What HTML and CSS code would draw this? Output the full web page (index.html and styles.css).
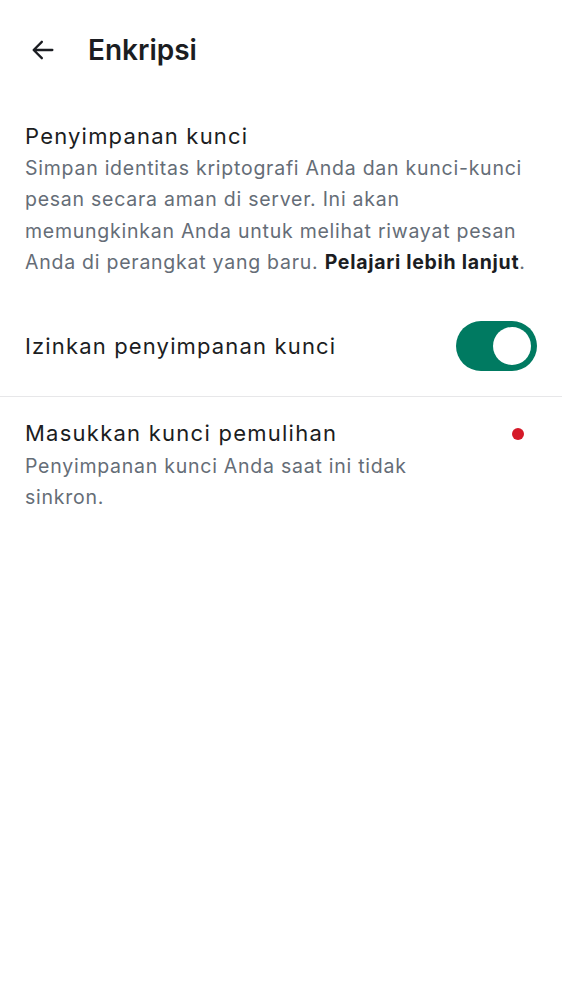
FILE: index.html
```html
<!DOCTYPE html>
<html lang="id">
<head>
<meta charset="utf-8">
<link rel="stylesheet" href="styles.css">
</head>
<body>
<header class="topbar">
  <svg class="back" width="28" height="28" viewBox="0 0 24 24"><path d="M20 12H4.5M11 5l-7 7 7 7" fill="none" stroke="#1b1d22" stroke-width="2" stroke-linecap="round" stroke-linejoin="round"/></svg>
  <h1 class="title">Enkripsi</h1>
</header>
<section class="info">
  <h2 class="info-title">Penyimpanan kunci</h2>
  <p class="info-text">Simpan identitas kriptografi Anda dan kunci-kunci pesan secara aman di server. Ini akan memungkinkan Anda untuk melihat riwayat pesan Anda di perangkat yang baru. <b class="link">Pelajari lebih lanjut</b>.</p>
</section>
<div class="toggle-row">
  <span class="toggle-label">Izinkan penyimpanan kunci</span>
  <span class="switch"><span class="knob"></span></span>
</div>
<div class="divider"></div>
<div class="item">
  <div class="item-body">
    <div class="item-title">Masukkan kunci pemulihan</div>
    <div class="item-text">Penyimpanan kunci Anda saat ini tidak sinkron.</div>
  </div>
  <span class="dot"></span>
</div>
</body>
</html>
```
FILE: styles.css
```css
html, body { margin: 0; padding: 0; background: #fff; }
body { font-family: Inter, Roboto, sans-serif; color: #1b1d22; width: 562px; }
.topbar { display: flex; align-items: center; height: 100px; padding-left: 29px; box-sizing: border-box; }
.back { display: block; }
.title { margin: 0 0 0 31px; font-weight: 600; font-size: 28px; line-height: 36px; color: #1b1d22; }
.info { padding: 19px 25px 0 25px; }
.info-title { margin: 0; font-weight: 400; font-size: 22px; line-height: 34px; letter-spacing: 1.2px; }
.info-text { margin: 0; font-size: 19.5px; line-height: 31.3px; color: #656d77; letter-spacing: 0.75px; }
.link { color: #1b1d22; font-weight: 700; letter-spacing: 0.7px; }
.toggle-row { display: flex; align-items: center; justify-content: space-between; padding: 0 25px; height: 100px; margin-top: 18px; }
.toggle-label { font-size: 22px; letter-spacing: 1.15px; }
.switch { width: 81px; height: 50px; border-radius: 25px; background: #007a61; display: flex; align-items: center; justify-content: flex-end; padding-right: 6px; box-sizing: border-box; }
.knob { width: 38px; height: 38px; border-radius: 50%; background: #fff; }
.divider { height: 1px; background: #e7e7e9; }
.item { display: flex; justify-content: space-between; align-items: flex-start; padding: 18px 38px 0 25px; }
.item-title { font-size: 22px; line-height: 36px; letter-spacing: 1.25px; }
.item-text { font-size: 19.5px; line-height: 31px; color: #656d77; letter-spacing: 0.75px; width: 420px; }
.dot { width: 12px; height: 12px; border-radius: 50%; background: #d51928; margin-top: 13px; }
```
